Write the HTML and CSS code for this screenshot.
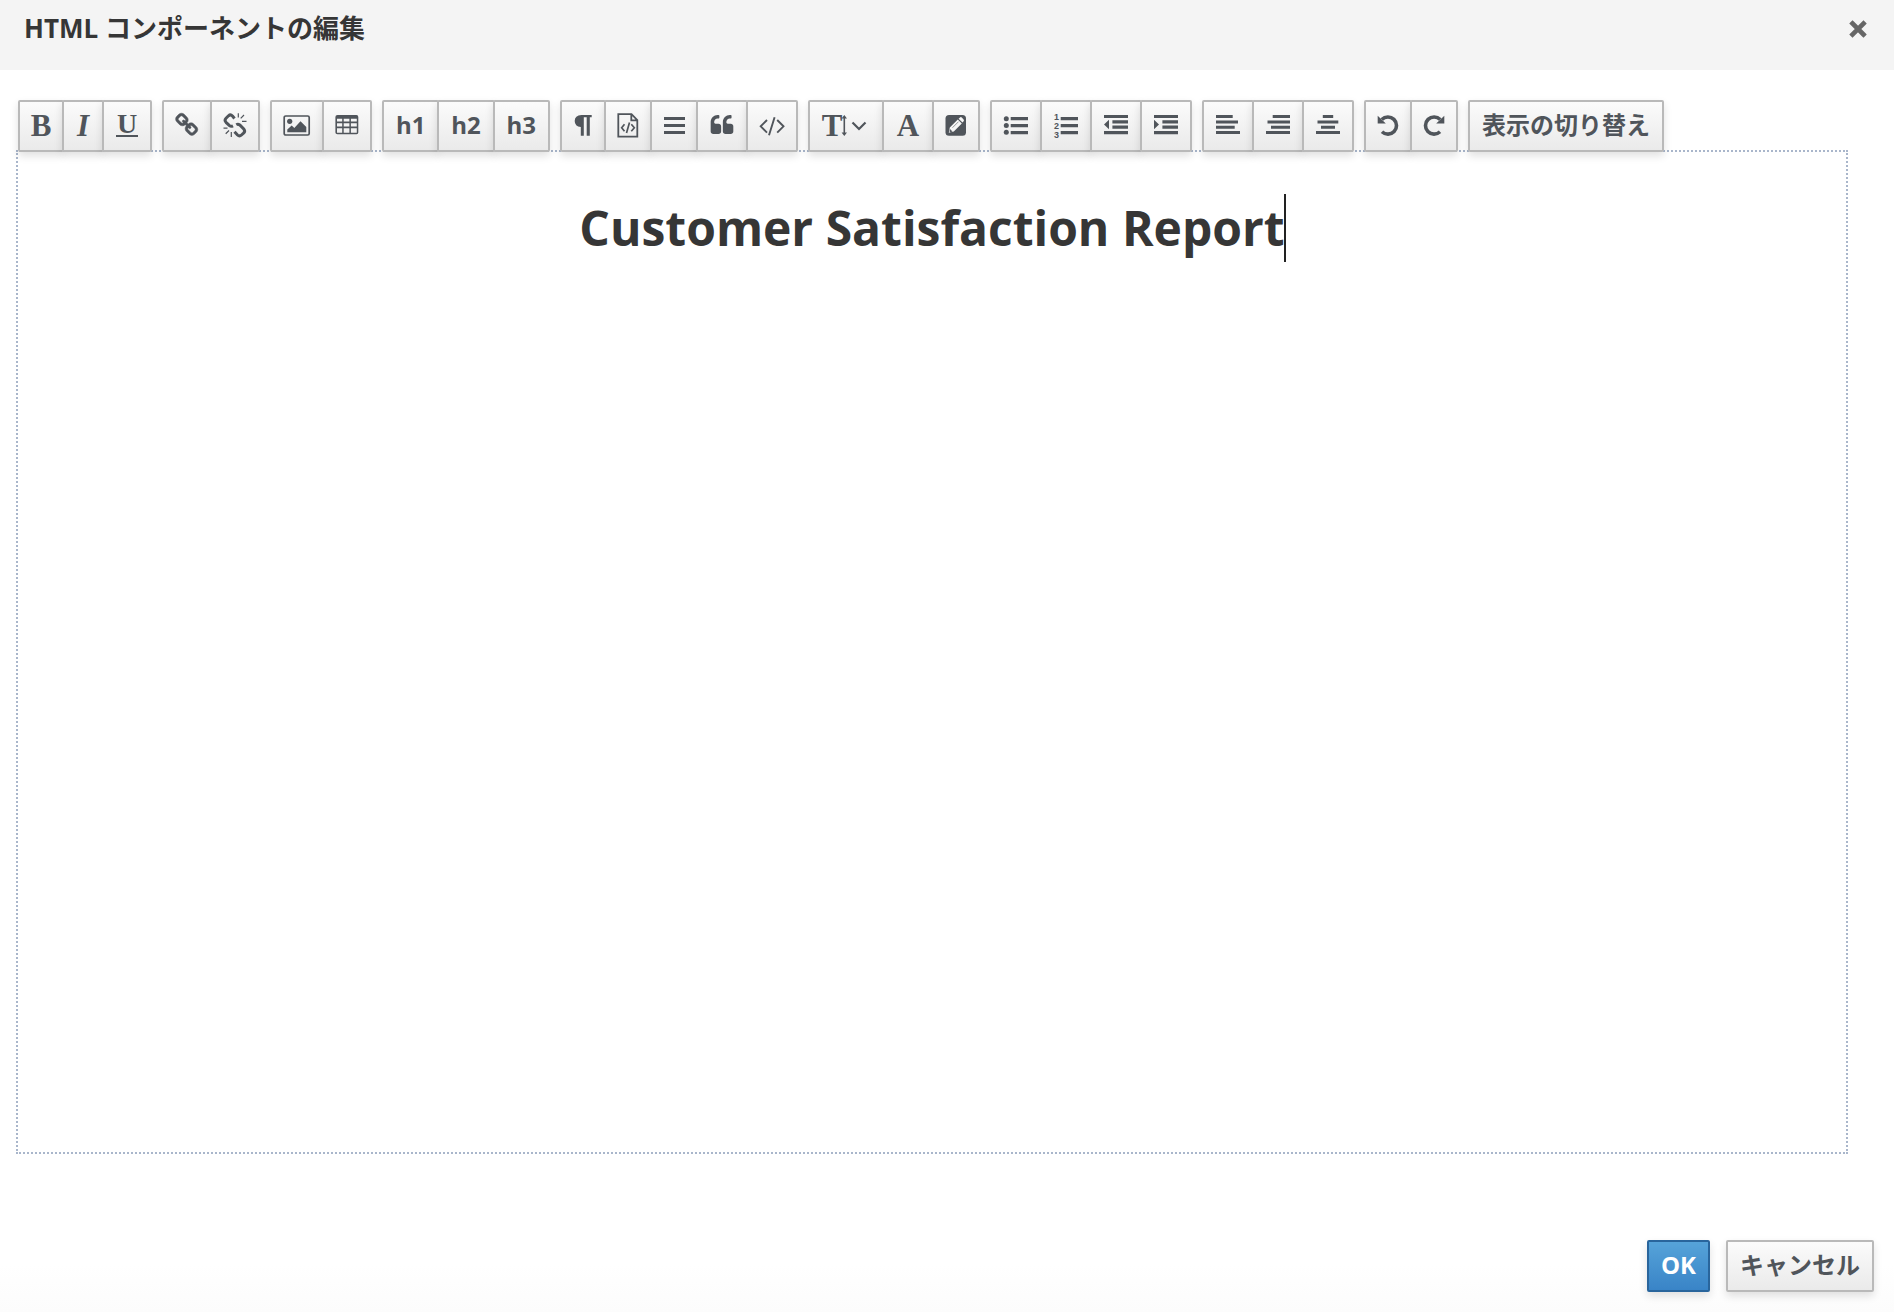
FILE: index.html
```html
<!DOCTYPE html>
<html lang="ja">
<head>
<meta charset="utf-8">
<title>HTML コンポーネントの編集</title>
<link rel="stylesheet" href="styles.css">
</head>
<body>
<div class="dialog" role="dialog" aria-labelledby="dialog-title">
  <header class="dialog-header">
    <h2 class="dialog-title" id="dialog-title">HTML コンポーネントの編集</h2>
    <button class="close" type="button" aria-label="閉じる">
      <svg width="18" height="18" viewBox="0 0 18 18"><path d="M3.500 3.500L14.500 14.500M14.500 3.500L3.500 14.500" fill="none" stroke="#666" stroke-width="4.600" stroke-linecap="square"/></svg>
    </button>
  </header>
  <main class="dialog-body">
    <div class="toolbar" role="toolbar" aria-label="書式">
      <div class="group">
        <button class="btn" type="button" aria-label="太字"><span class="glyph w18">B</span></button>
        <button class="btn" type="button" aria-label="斜体"><span class="glyph italic w14">I</span></button>
        <button class="btn" type="button" aria-label="下線"><span class="glyph underline w22">U</span></button>
      </div>
      <div class="group">
        <button class="btn" type="button" aria-label="リンク">
          <svg class="icon w22" viewBox="0 0 22 24"><path stroke="#50555b" stroke-width="36" transform="translate(-1.500 -1) scale(.0136)" d="M1520 1216q0-40-28-68l-208-208q-28-28-68-28-42 0-72 32 3 3 19 18.500t21.500 21.500 15 19 13 25.500 3.500 27.500q0 40-28 68t-68 28q-15 0-27.500-3.500t-25.500-13-19-15-21.500-21.500-18.500-19q-33 31-33 73 0 40 28 68l206 207q27 27 68 27 40 0 68-26l147-146q28-28 28-67zm-703-705q0-40-28-68l-206-207q-28-28-68-28-39 0-68 27l-147 146q-28 28-28 67 0 40 28 68l208 208q27 27 68 27 42 0 72-31-3-3-19-18.500t-21.500-21.500-15-19-13-25.500-3.500-27.500q0-40 28-68t68-28q15 0 27.500 3.500t25.500 13 19 15 21.500 21.500 18.500 19q33-31 33-73zm895 705q0 120-85 203l-147 146q-83 83-203 83-121 0-204-85l-206-207q-83-83-83-203 0-123 88-209l-88-88q-86 88-208 88-120 0-204-84l-208-208q-84-84-84-204t85-203l147-146q83-83 203-83 121 0 204 85l206 207q83 83 83 203 0 123-88 209l88 88q86-88 208-88 120 0 204 84l208 208q84 84 84 204z"/></svg>
        </button>
        <button class="btn" type="button" aria-label="リンク解除">
          <svg class="icon line w22" viewBox="0 0 22 24"><path stroke-width="3" d="M10.500 4.500L8.500 2Q6.500 0 4.500 1.800L2 4.300Q0 6.300 2 8.300L5.500 11.600Q7 12.800 9 11.800M12.300 10.700Q14 9.700 15.800 11L20 15.300Q21.500 17.300 19.500 19.200L17.500 21Q15.500 22.800 13.500 21L10.500 17.800"/><path stroke-width="1.200" d="M14.300-.7V3.400M20 1L16.700 4.300M22.500 7.300H18M-.5 14.200H3.500M1.700 19.700L5 16.500M7.300 18V23"/></svg>
        </button>
      </div>
      <div class="group">
        <button class="btn" type="button" aria-label="画像">
          <svg class="icon w26" viewBox="0 0 26 24"><rect x=".2" y="2" width="25" height="19" rx="1.500" fill="none" stroke="#50555b" stroke-width="1.700"/><circle cx="5.700" cy="7.300" r="2.600"/><path d="M3.300 18.300V15.500L7.700 11.500 10.300 14 16.500 7.200 22.300 13V18.300z"/></svg>
        </button>
        <button class="btn" type="button" aria-label="表">
          <svg class="icon w22" viewBox="0 0 22 24"><path fill-rule="evenodd" d="M1.500 1H20.500Q22.300 1 22.300 3V18.500Q22.300 20.300 20.500 20.300H1.500Q-.6 20.300-.6 18.500V3Q-.6 1 1.500 1zM1 4.700V7.500H6.200V4.700zM7.700 4.700V7.500H13.400V4.700zM14.900 4.700V7.500H20.800V4.700zM1 9.200V12.500H6.200V9.200zM7.700 9.200V12.500H13.400V9.200zM14.900 9.200V12.500H20.800V9.200zM1 14.200V18.700H6.200V14.200zM7.700 14.200V18.700H13.400V14.200zM14.900 14.200V18.700H20.800V14.200z"/></svg>
        </button>
      </div>
      <div class="group headings">
        <button class="btn" type="button">h1</button>
        <button class="btn" type="button">h2</button>
        <button class="btn" type="button">h3</button>
      </div>
      <div class="group">
        <button class="btn" type="button" aria-label="段落">
          <svg class="icon w18" viewBox="0 0 18 24"><path d="M17.700 1V3.300H15.800V21.700H12.700V3.300H9.800V21.700H6.800V13Q.7 12.500.7 7T7.500 1z"/></svg>
        </button>
        <button class="btn" type="button" aria-label="コードブロック">
          <svg class="icon line w20" viewBox="0 0 20 24"><path stroke-width="1.800" d="M.3.200H13.500L19.300 6V22.600H.3zM13.300.500V6.300H19"/><path stroke-width="1.700" d="M6.500 10.300L3.700 13.800 6.500 17.300M13.300 10.300L16.300 13.800 13.300 17.300M11.500 8.500L8.500 19"/></svg>
        </button>
        <button class="btn" type="button" aria-label="両端揃え">
          <svg class="icon w20" viewBox="0 0 20 24"><path d="M0 3H21V6H0zM0 10H21V13H0zM0 17H21V20H0z"/></svg>
        </button>
        <button class="btn" type="button" aria-label="引用">
          <svg class="icon w24" viewBox="0 0 24 24"><path transform="translate(-.2 -.8) scale(.0136)" d="M832 960v384q0 80-56 136t-136 56h-384q-80 0-136-56t-56-136v-704q0-104 40.500-198.500t109.500-163.500 163.500-109.500 198.500-40.500h64q26 0 45 19t19 45v128q0 26-19 45t-45 19h-64q-106 0-181 75t-75 181v32q0 40 28 68t68 28h224q80 0 136 56t56 136zm896 0v384q0 80-56 136t-136 56h-384q-80 0-136-56t-56-136v-704q0-104 40.500-198.500t109.500-163.500 163.500-109.500 198.500-40.500h64q26 0 45 19t19 45v128q0 26-19 45t-45 19h-64q-106 0-181 75t-75 181v32q0 40 28 68t68 28h224q80 0 136 56t56 136z"/></svg>
        </button>
        <button class="btn" type="button" aria-label="コード">
          <svg class="icon line w24" viewBox="0 0 24 24"><path stroke-width="1.900" d="M7 6L.7 12.300 7 18.600M17.200 6L23.500 12.300 17.200 18.600M14.600 3.300L9 21.300"/></svg>
        </button>
      </div>
      <div class="group">
        <button class="btn" type="button" aria-label="フォントサイズ" aria-haspopup="true">
          <span class="glyph w20">T</span><svg class="icon w28" viewBox="0 0 28 24"><path d="M2.300 1L5 4.500H3.100V18.500H5L2.300 22-.4 18.500H1.500V4.500H-.4z"/><path d="M10.500 8.500L17 15 23.500 8.500" fill="none" stroke="#50555b" stroke-width="2.200"/></svg>
        </button>
        <button class="btn" type="button" aria-label="文字色"><span class="glyph w24">A</span></button>
        <button class="btn" type="button" aria-label="背景色">
          <svg class="icon w20" viewBox="0 0 20 24"><rect x="-.5" y="1" width="20.500" height="20.700" rx="3.500"/><path fill="#f6f6f6" d="M2.800 18.800L3.800 13.500 11.800 5.500 15.800 9.500 7.800 17.500zM12.600 4.700L14 3.400Q14.900 2.700 15.800 3.500L17.600 5.400Q18.400 6.300 17.600 7.300L16.500 8.600z"/><path d="M4 15.500L6.200 17.600 4 18zM6.500 13.700L12.500 7.700" stroke="#50555b" stroke-width=".6"/></svg>
        </button>
      </div>
      <div class="group">
        <button class="btn" type="button" aria-label="箇条書き">
          <svg class="icon w24" viewBox="0 0 24 24"><circle cx="2.300" cy="4.700" r="2.500"/><circle cx="2.300" cy="11.500" r="2.500"/><circle cx="2.300" cy="18.300" r="2.500"/><path d="M6.700 3H24V6.300H6.700zM6.700 10H24V13.300H6.700zM6.700 17H24V20.300H6.700z"/></svg>
        </button>
        <button class="btn" type="button" aria-label="番号付きリスト">
          <svg class="icon w24" viewBox="0 0 24 24"><g class="digits"><text x="0" y="6">1</text><text x="0" y="15">2</text><text x="0" y="24">3</text></g><path d="M6.700 3H24V6.300H6.700zM6.700 10H24V13.300H6.700zM6.700 17H24V20.300H6.700z"/></svg>
        </button>
        <button class="btn" type="button" aria-label="インデント解除">
          <svg class="icon w24" viewBox="0 0 24 24"><path d="M0 1H24V4H0zM8.400 6.300H24V9.500H8.400zM8.400 11.600H24V14.800H8.400zM0 17H24V20.200H0zM0 10.500L5 5.700V15.300z"/></svg>
        </button>
        <button class="btn" type="button" aria-label="インデント">
          <svg class="icon w24" viewBox="0 0 24 24"><path d="M0 1H24V4H0zM8.400 6.300H24V9.500H8.400zM8.400 11.600H24V14.800H8.400zM0 17H24V20.200H0zM5 10.500L0 5.700V15.300z"/></svg>
        </button>
      </div>
      <div class="group">
        <button class="btn" type="button" aria-label="左揃え">
          <svg class="icon w24" viewBox="0 0 24 24"><path d="M0 1H16.700V4H0zM0 6.500H22V9.500H0zM0 11.700H18.700V14.700H0zM0 17H24V20H0z"/></svg>
        </button>
        <button class="btn" type="button" aria-label="右揃え">
          <svg class="icon w24" viewBox="0 0 24 24"><path d="M6.700 1H24V4H6.700zM1.500 6.500H24V9.500H1.500zM5 11.700H24V14.700H5zM0 17H24V20H0z"/></svg>
        </button>
        <button class="btn" type="button" aria-label="中央揃え">
          <svg class="icon w24" viewBox="0 0 24 24"><path d="M6.800 1H17.200V4H6.800zM1.500 6.500H22.300V9.500H1.500zM5 11.700H19V14.700H5zM0 17H24V20H0z"/></svg>
        </button>
      </div>
      <div class="group">
        <button class="btn" type="button" aria-label="元に戻す">
          <svg class="icon w20" viewBox="0 0 20 24"><path d="M4 17.800A8.600 8.600 0 1 0 3.800 5.500" fill="none" stroke="#50555b" stroke-width="3.600"/><path d="M-.3 1.700V9.600H7.800z"/></svg>
        </button>
        <button class="btn" type="button" aria-label="やり直す">
          <svg class="icon w20" viewBox="0 0 20 24"><path d="M16 17.800A8.600 8.600 0 1 1 16.200 5.500" fill="none" stroke="#50555b" stroke-width="3.600"/><path d="M20.300 1.700V9.600H12.200z"/></svg>
        </button>
      </div>
      <div class="group">
        <button class="btn" type="button">表示の切り替え</button>
      </div>
    </div>
    <div class="editor" role="textbox" aria-multiline="true" aria-label="HTML コンポーネント" contenteditable="true">
      <h1 class="report-title">Customer Satisfaction Report<span class="caret"></span></h1>
    </div>
  </main>
  <footer class="dialog-footer">
    <button class="btn primary" type="button">OK</button>
    <button class="btn" type="button">キャンセル</button>
  </footer>
</div>
</body>
</html>
```
FILE: styles.css
```css
* {
  box-sizing: border-box;
}

body {
  margin: 0;
  background: #fff;
  color: #363636;
  font-family: "Open Sans", "Noto Sans CJK JP", sans-serif;
}

.dialog {
  display: flex;
  flex-direction: column;
  min-height: 100vh;
}

.dialog-header {
  display: flex;
  justify-content: space-between;
  align-items: flex-start;
  height: 70px;
  padding: 8px 27px 0 24px;
  background: #f4f4f4;
}

.dialog-title {
  margin: 0;
  font-size: 26px;
  line-height: 40px;
  font-weight: 700;
}

.close {
  display: flex;
  align-items: center;
  height: 42px;
  padding: 0;
  border: 0;
  background: none;
}

.dialog-body {
  display: flex;
  flex: 1;
  flex-direction: column;
  padding: 30px 46px 0 16px;
}

.toolbar {
  position: relative;
  z-index: 1;
  display: flex;
  flex-wrap: wrap;
  gap: 10px;
  margin-bottom: -2px;
  padding-left: 2px;
}

.group {
  display: flex;
}

.btn {
  display: flex;
  align-items: center;
  justify-content: center;
  height: 52px;
  padding: 0 12px 2px;
  border: 2px solid #b9b9b9;
  border-radius: 2px;
  background: linear-gradient(#fbfbfb, #eaeaea);
  box-shadow: 0 4px 8px rgba(0, 0, 0, 0.12);
  color: #50555b;
  font-family: inherit;
  font-size: 24px;
  line-height: 32px;
  font-weight: 700;
  white-space: nowrap;
}

.group .btn + .btn {
  margin-left: -2px;
}

.headings {
  width: 168px;
}

.headings .btn {
  flex: 1;
  padding-right: 0;
  padding-left: 0;
}

.btn:has(.icon),
.btn:has(.glyph) {
  padding-bottom: 0;
}

.icon {
  flex: none;
  height: 24px;
  overflow: visible;
  fill: #50555b;
}

.line {
  fill: none;
  stroke: #50555b;
}

.digits {
  font-family: "Liberation Sans", sans-serif;
  font-size: 9px;
  font-weight: 700;
}

.glyph {
  display: flex;
  justify-content: center;
  font-family: "Liberation Serif", serif;
  font-size: 31px;
  line-height: 32px;
}

.italic {
  font-style: italic;
}

.underline {
  height: 22px;
  border-bottom: 2px solid #50555b;
  font-size: 28px;
  line-height: 18px;
}

.w14 { width: 14px; }
.w18 { width: 18px; }
.w20 { width: 20px; }
.w22 { width: 22px; }
.w24 { width: 24px; }
.w26 { width: 26px; }
.w28 { width: 28px; }

.editor {
  flex: 1;
  padding: 42px 20px;
  border: 2px dotted #a9b6cb;
  outline: 0;
}

.report-title {
  margin: 0;
  font-size: 48px;
  line-height: 68px;
  font-weight: 700;
  text-align: center;
}

.caret {
  display: inline-block;
  width: 2px;
  height: 68px;
  margin-right: -1px;
  margin-left: -1px;
  background: #222;
  vertical-align: top;
}

.dialog-footer {
  display: flex;
  justify-content: flex-end;
  gap: 16px;
  padding: 86px 20px 20px;
  background: linear-gradient(#fff 70%, #fcfcfc);
}

.primary {
  border-color: #29659c;
  background: linear-gradient(#56a3d9, #3984c7);
  color: #fff;
}
```
